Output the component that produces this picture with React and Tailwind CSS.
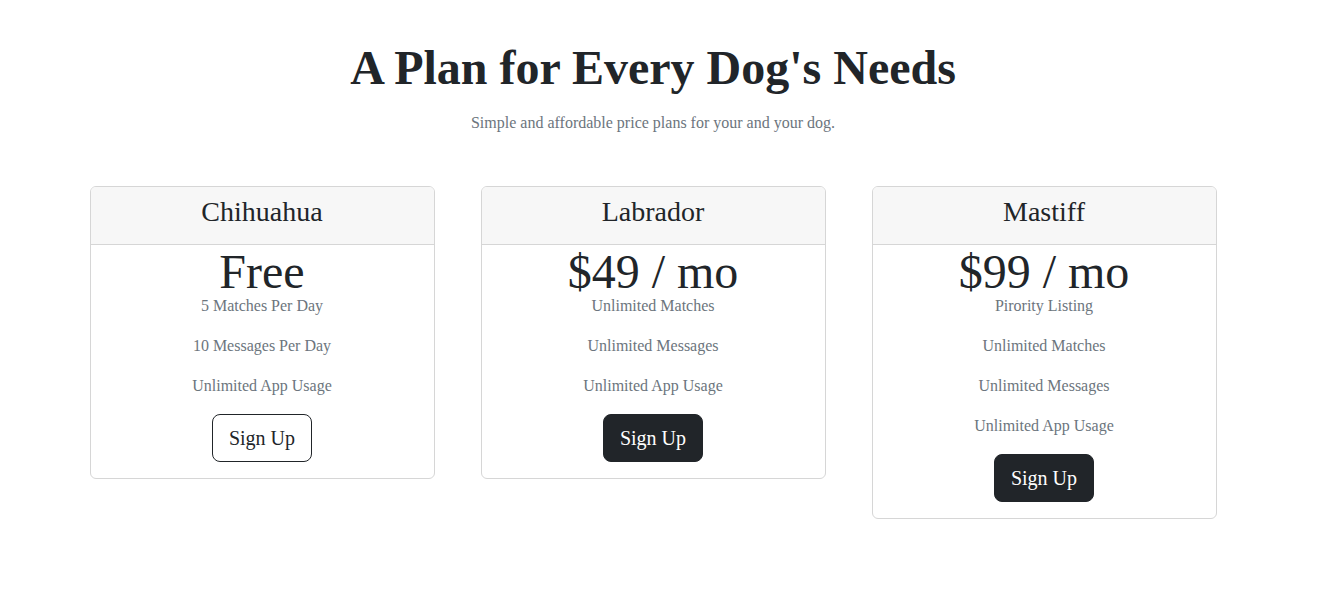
import React from "react";

const plans = [
  {
    name: "Chihuahua",
    price: "Free",
    features: ["5 Matches Per Day", "10 Messages Per Day", "Unlimited App Usage"],
    outline: true,
  },
  {
    name: "Labrador",
    price: "$49 / mo",
    features: ["Unlimited Matches", "Unlimited Messages", "Unlimited App Usage"],
    outline: false,
  },
  {
    name: "Mastiff",
    price: "$99 / mo",
    features: ["Pirority Listing", "Unlimited Matches", "Unlimited Messages", "Unlimited App Usage"],
    outline: false,
  },
];

function Card({ plan }) {
  return (
    <div className="w-[345px] rounded-[6px] border border-[#d6d6d6] bg-white text-center">
      <div className="rounded-t-[5px] border-b border-[#d6d6d6] bg-[#f7f7f7] px-4 pt-2 pb-2">
        <h4 className="mb-2 text-[28px] leading-[1.2] font-normal text-[#212529]">{plan.name}</h4>
      </div>
      <div className="px-4 pb-4">
        <div className="pt-[5px] text-[48px] leading-[44px] font-normal text-[#212529]">{plan.price}</div>
        {plan.features.map((f) => (
          <p key={f} className="mb-4 text-[16px] leading-6 text-[#6c757d]">
            {f}
          </p>
        ))}
        {plan.outline ? (
          <button className="h-[48px] rounded-lg border border-[#212529] bg-white px-4 text-[20px] leading-[30px] text-[#212529]">
            Sign Up
          </button>
        ) : (
          <button className="h-[48px] rounded-lg border border-[#212529] bg-[#212529] px-4 text-[20px] leading-[30px] text-white">
            Sign Up
          </button>
        )}
      </div>
    </div>
  );
}

export default function App() {
  return (
    <div
      className="min-h-[603px] w-[1306px] bg-white text-[#212529]"
      style={{ fontFamily: '"Liberation Serif", "Times New Roman", serif' }}
    >
      <div className="pt-[39px] text-center">
        <h1 className="text-[48px] leading-[1.2] font-bold text-[#212529]">A Plan for Every Dog's Needs</h1>
        <p className="mt-[14px] text-[16px] leading-6 text-[#6c757d]">
          Simple and affordable price plans for your and your dog.
        </p>
      </div>
      <div className="mx-auto mt-[51px] grid w-[1127px] grid-cols-[345px_345px_345px] items-start gap-[46px]">
        {plans.map((p) => (
          <Card key={p.name} plan={p} />
        ))}
      </div>
    </div>
  );
}
